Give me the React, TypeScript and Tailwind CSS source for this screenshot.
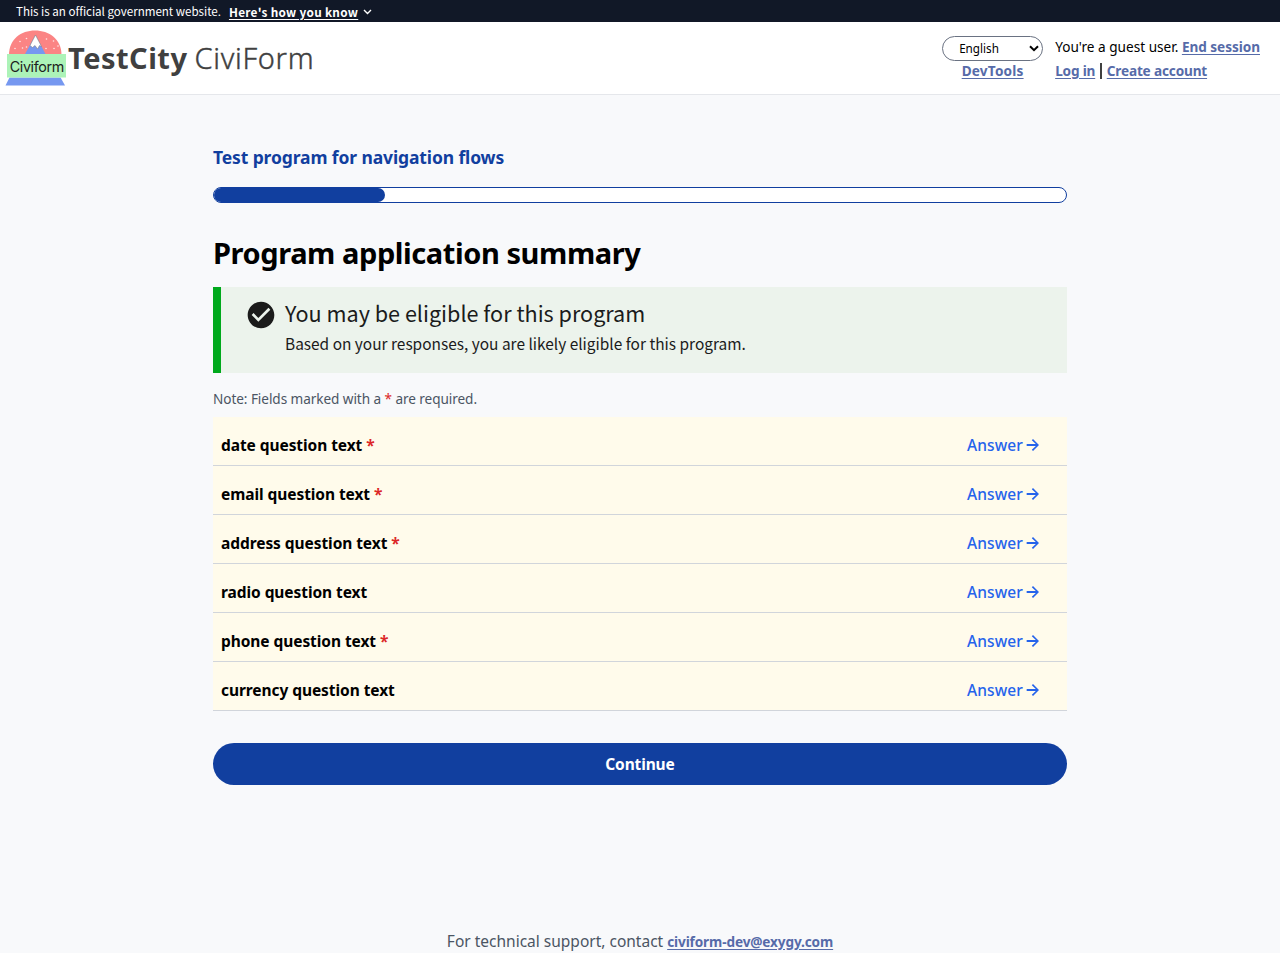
import type { ReactNode } from 'react'

const questions = [
  { text: 'date question text', required: true },
  { text: 'email question text', required: true },
  { text: 'address question text', required: true },
  { text: 'radio question text', required: false },
  { text: 'phone question text', required: true },
  { text: 'currency question text', required: false },
]

function Logo() {
  return (
    <svg className="block h-[60px] w-[64px] shrink-0" viewBox="0 0 64 60">
      <path d="M5 27C5 11 17 2.500 31 2.500S57.500 11 57.500 27Z" fill="#fb8484" />
      <path d="M31.500 7L42 27H20.500Z" fill="#7698f0" />
      <path d="M31.500 7L37.500 18.500L35.500 17.500L33.500 21L31 17.500L28.500 19.500L26 17.500Z" fill="#fff" stroke="#777" strokeWidth=".5" />
      <g fill="#fff" opacity=".8">
        <circle cx="22.500" cy="10.500" r=".8" /><circle cx="16" cy="13.500" r=".8" /><circle cx="22.500" cy="19" r=".8" />
        <circle cx="18.500" cy="20" r=".8" /><circle cx="11" cy="20.500" r=".8" /><circle cx="42.500" cy="11" r=".8" />
        <circle cx="49.500" cy="13" r=".8" /><circle cx="42" cy="20.500" r=".8" /><circle cx="50" cy="20.500" r=".8" /><circle cx="54" cy="18" r=".8" />
      </g>
      <path d="M5.500 49.500H56.500L61 57.500H1.500Z" fill="#7698f0" />
      <rect x="3" y="26" width="59" height="23.500" fill="#acf3b8" />
      <text x="5.700" y="43.500" textLength="54.500" fontSize="14.300" fontFamily="Inter, sans-serif" fill="#1c211d">Civiform</text>
    </svg>
  )
}

function Link({ children, className }: { children: ReactNode; className: string }) {
  return (
    <a href="#" className={`text-[13.6px] font-bold text-[#566ba9] underline underline-offset-2 ${className}`}>
      {children}
    </a>
  )
}

function Arrow() {
  return (
    <svg className="mb-[2px] ml-[2px] size-4" viewBox="0 0 24 24" fill="currentColor">
      <path d="M12 3L10.200 4.800L16.200 10.500H2.500V13.500H16.200L10.200 19.200L12 21L21 12Z" />
    </svg>
  )
}

export default function App() {
  return (
    <div className="flex h-[953px] flex-col overflow-hidden bg-[#f8f9fb] font-['Noto_Sans',sans-serif] text-black">
      <div className="flex h-[22px] shrink-0 items-center bg-[#111827] pt-px pl-4 font-['Noto_Sans_CJK_SC',sans-serif] text-[11.6px] text-white">
        <span className="leading-none tracking-[-0.02px]">This is an official government website.</span>
        <button className="ml-2 text-[11.8px] leading-none font-bold tracking-[0.29px] underline underline-offset-2">
          Here&#39;s how you know
        </button>
        <svg className="ml-[5px] h-[6px] w-[9px]" viewBox="0 0 9 6" fill="none" stroke="currentColor" strokeWidth="1.400">
          <path d="M1 1L4.500 4.500L8 1" />
        </svg>
      </div>

      <header className="flex h-[73px] shrink-0 items-center justify-between border-b border-gray-200 bg-white pr-5 pl-1">
        <div className="flex items-center text-[29px] leading-none text-[#404040]">
          <Logo />
          <div className="flex gap-[7px] pb-px">
            <b className="tracking-[0.48px]">TestCity</b>
            <span className="font-light tracking-[0.7px] [-webkit-text-stroke:0.4px_#404040]">CiviForm</span>
          </div>
        </div>
        <div className="flex gap-3 pt-[2px]">
          <div className="flex w-[101px] flex-col items-center pt-px">
            <div className="flex h-[25px] w-full items-center justify-between rounded-full border border-gray-500 pr-[3px] pl-4 text-[11.7px]">
              English
              <svg className="h-[7px] w-[10px]" viewBox="0 0 10 7" fill="none" stroke="currentColor" strokeWidth="2">
                <path d="M1 1.200L5 5.200L9 1.200" />
              </svg>
            </div>
            <Link className="leading-[20px] tracking-[0.2px]">DevTools</Link>
          </div>
          <div className="text-[13.6px] leading-6">
            <div className="flex h-6 gap-[3.500px]">
              <span className="tracking-[0.01px]">You&#39;re a guest user.</span>
              <Link className="tracking-[-0.04px]">End session</Link>
            </div>
            <div className="flex h-6 items-center">
              <Link className="tracking-[-0.17px]">Log in</Link>
              <span className="mx-[5px] h-4 w-[1.500px] bg-neutral-700" />
              <Link className="tracking-[-0.16px]">Create account</Link>
            </div>
          </div>
        </div>
      </header>

      <main className="mx-auto w-[854px] flex-1">
        <h2 className="mt-[48px] text-[17.5px] leading-7 font-bold tracking-[-0.12px] text-[#113f9f]">
          Test program for navigation flows
        </h2>
        <div className="mt-4 h-4 rounded-full border border-[#113f9f] bg-white">
          <div className="h-full w-[171px] rounded-full bg-[#113f9f]" />
        </div>
        <h1 className="mt-8 h-[52px] text-[29px] leading-9 font-bold tracking-[-0.42px]">Program application summary</h1>
        <section className="flex h-[86px] border-l-8 border-[#00a91c] bg-[#ecf3ec] pt-3 pl-6 font-['Noto_Sans_CJK_SC',sans-serif] text-[#1b1b1b]">
          <svg className="size-8 shrink-0" viewBox="0 0 24 24" fill="currentColor">
            <path d="M12 2C6.480 2 2 6.480 2 12s4.480 10 10 10 10-4.480 10-10S17.520 2 12 2zm-2 15-5-5 1.410-1.410L10 14.170l7.590-7.590L19 8l-9 9z" />
          </svg>
          <div className="-mt-px ml-2">
            <h3 className="text-[21.6px] leading-[30px]">You may be eligible for this program</h3>
            <p className="text-[15.44px] leading-[30px]">
              Based on your responses, you are likely eligible for this program.
            </p>
          </div>
        </section>
        <p className="mt-4 text-[13.6px] leading-5 tracking-[-0.07px] text-[#4b5563]">
          Note: Fields marked with a <span className="text-[#dc2626]">*</span> are required.
        </p>
        <div className="mt-2 text-[15.5px]">
          {questions.map((q) => (
            <div key={q.text} className="flex h-[49px] items-center justify-between border-b border-[#d1d5db] bg-[#fffbeb] pt-[9px] pr-[26px] pl-2">
              <span className="font-bold tracking-[-0.07px]">
                {q.text}
                {q.required && <span className="text-[#dc2626]"> *</span>}
              </span>
              <a href="#" className="flex items-center font-medium tracking-[0.1px] text-[#2563eb]">
                Answer
                <Arrow />
              </a>
            </div>
          ))}
        </div>
        <button className="mt-8 h-[42px] w-full rounded-full bg-[#113f9f] pt-[2px] text-[15.5px] font-bold tracking-[-0.14px] text-white">
          Continue
        </button>
      </main>

      <footer className="flex h-6 shrink-0 items-baseline justify-center gap-1 text-[15.5px] leading-6 text-[#4b5563]">
        <span>For technical support, contact</span>
        <Link className="tracking-[-0.12px]">civiform-dev@exygy.com</Link>
      </footer>
    </div>
  )
}
